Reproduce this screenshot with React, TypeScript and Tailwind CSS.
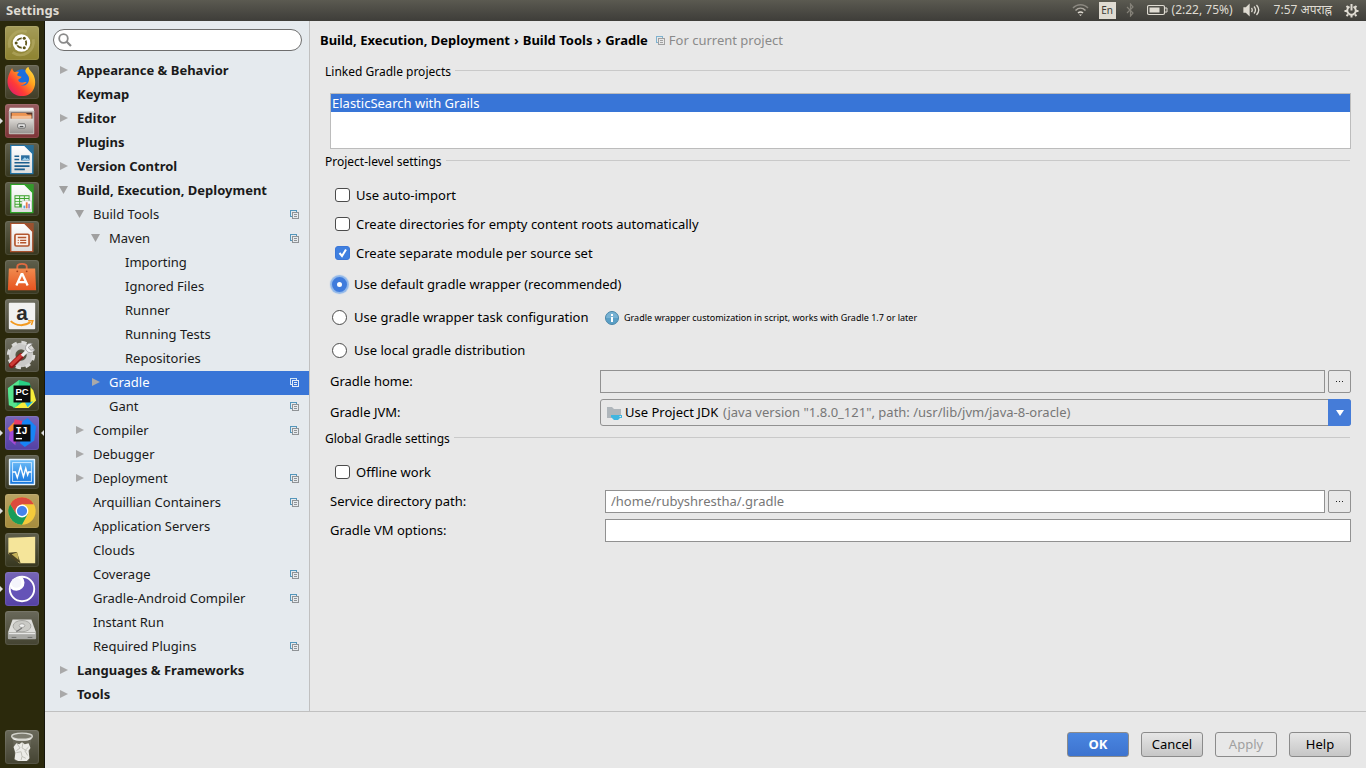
import type { ReactNode } from "react";

type Shape = { tile: string; mark?: "left" | "both"; label: string; art: ReactNode };

function DocArt({ fill, id, children }: { fill: string; id: string; children: ReactNode }) {
  return (
    <>
      <defs>
        <linearGradient id={id} x1="0" y1="0" x2="0" y2="1">
          <stop offset="0" stopColor="#fff" />
          <stop offset="1" stopColor="#dcdcdc" />
        </linearGradient>
      </defs>
      <path d="M5 1.500H20l8.500 8.500v21.500H5z" fill={`url(#${id})`} stroke={fill} strokeWidth="1.500" />
      <path d="M19.500 1h10v10z" fill={fill} opacity="0.85" />
      {children}
    </>
  );
}

const apps: Shape[] = [
  {
    label: "Dash",
    tile: "bg-[#8e8330]",
    art: (
      <>
        <path d="M4 22A14 14 0 0 1 22 5M7 27A14 14 0 0 0 29 13" stroke="#b7ae67" strokeWidth="3" fill="none" opacity=".6" />
        <circle cx="16.500" cy="17" r="9.300" fill="#fff" />
        <circle cx="16.500" cy="17" r="5" fill="none" stroke="#5d5418" strokeWidth="1.900" />
        <circle cx="11.500" cy="17" r="2.600" fill="#fff" />
        <circle cx="19" cy="12.700" r="2.600" fill="#fff" />
        <circle cx="19" cy="21.300" r="2.600" fill="#fff" />
        <circle cx="10.800" cy="17" r="1.600" fill="#5d5418" />
        <circle cx="19.400" cy="12" r="1.600" fill="#5d5418" />
        <circle cx="19.400" cy="22" r="1.600" fill="#5d5418" />
      </>
    ),
  },
  {
    label: "Firefox",
    tile: "bg-[#403d26]",
    art: (
      <>
        <defs>
          <linearGradient id="fx" x1="1" y1="0" x2="0" y2="1">
            <stop offset="0" stopColor="#fff04a" />
            <stop offset=".35" stopColor="#ffa11e" />
            <stop offset=".65" stopColor="#ff3c35" />
            <stop offset="1" stopColor="#d4127e" />
          </linearGradient>
        </defs>
        <circle cx="17" cy="14" r="10.500" fill="#1c6fe0" />
        <path d="M4 7c1-3 2-4 2.500-5 .5 2 1.500 4 3 4.500 1.500-.5 3-.5 4.500 0-1.500 1-2 2-2 3.500 1.500 1 3 .8 4.500 1.500-.5 1.800-2.500 2-3.500 3 .2 1.800 1.500 3 3.500 3 2.200.2 3.500-1 5.500-.5-1.500 2.500-4 3.500-6.500 3.500 5 1.500 9-2 9-7 0-3.500-3-5-4-8 .2-2.500 1.500-4 3.500-4.500 0 3 4 5 5.500 9C34 21 28 32 17 32 6 32 0 22 2 13c.4-2 1-4 2-6z" fill="url(#fx)" />
      </>
    ),
  },
  {
    label: "Files",
    tile: "bg-[#7e3437]",
    mark: "left",
    art: (
      <>
        <defs>
          <linearGradient id="fl" x1="0" y1="0" x2="0" y2="1">
            <stop offset="0" stopColor="#dedbd7" />
            <stop offset="1" stopColor="#979390" />
          </linearGradient>
        </defs>
        <path d="M4 3h25l1 4H3z" fill="#f3f1ee" />
        <rect x="3" y="6" width="27" height="25" rx="1" fill="#c4c0bc" />
        <path d="M5 8h23v7H5z" fill="#57342b" />
        <path d="M6 8.500h15l2 1.500h4v5H6z" fill="#ec9350" />
        <path d="M6 11.500h21v3H6z" fill="#f6bd91" />
        <path d="M4 14.500h25V30H4z" fill="url(#fl)" />
        <rect x="12.500" y="20" width="8" height="4.500" rx="1" fill="#eee" stroke="#666" />
        <path d="M14.500 22.800h4" stroke="#555" strokeWidth="1.300" />
      </>
    ),
  },
  {
    label: "Writer",
    tile: "bg-[#37371f]",
    art: (
      <DocArt fill="#2372a3" id="dw">
        <path d="M9 13h5M9 16.500h5M9 20h16M9 23.500h16M9 27h11" stroke="#1d5f8e" strokeWidth="1.700" />
        <rect x="16" y="12" width="9" height="5.500" fill="#2c6fa0" />
        <path d="m17 17 3-3 2 2 1-1 2 2z" fill="#9bd0ee" />
      </DocArt>
    ),
  },
  {
    label: "Calc",
    tile: "bg-[#37371f]",
    art: (
      <DocArt fill="#2fa328" id="dc">
        <path d="M9 13h16v13H9z" fill="#3da12d" />
        <path d="M10 14h4v2h-4zM15 14h4v2h-4zM20 14h4v2h-4zM10 17h4v2h-4zM15 17h4v2h-4zM20 17h4v2h-4zM10 20h4v2h-4zM15 20h4v2h-4zM10 23h4v2h-4z" fill="#e9f6e6" />
        <path d="M17 19h10v9H17z" fill="#fff" stroke="#bbb" strokeWidth=".6" />
        <path d="M18.500 24h2v3h-2z" fill="#54a4df" />
        <path d="M21 20.500h2V27h-2z" fill="#e87b45" />
        <path d="M23.500 22h2v5h-2z" fill="#a08bd0" />
      </DocArt>
    ),
  },
  {
    label: "Impress",
    tile: "bg-[#37371f]",
    art: (
      <DocArt fill="#a6502c" id="di">
        <rect x="9.500" y="13" width="15" height="12.500" rx="1.500" fill="#fbefe8" stroke="#b3562e" strokeWidth="1.800" />
        <path d="M12.500 16.500h9M15 19.500h6.500M15 22h6.500" stroke="#b3562e" strokeWidth="1.500" />
        <path d="M12.500 19.500h1M12.500 22h1" stroke="#b3562e" strokeWidth="1.500" />
      </DocArt>
    ),
  },
  {
    label: "Software",
    tile: "bg-[#37371f]",
    art: (
      <>
        <defs>
          <linearGradient id="sw" x1="0" y1="0" x2="0" y2="1">
            <stop offset="0" stopColor="#f08a4e" />
            <stop offset="1" stopColor="#e75420" />
          </linearGradient>
        </defs>
        <path d="M12 11V6c0-4 10-4 10 0v5" fill="none" stroke="#df6a41" strokeWidth="2" />
        <path d="M3 8h28l1 23H2z" fill="url(#sw)" />
        <path d="m11 26 5.500-12h1L23 26M12.500 22.500h9" fill="none" stroke="#fff" strokeWidth="2.400" />
        <circle cx="12" cy="11" r="1" fill="#a53c18" />
        <circle cx="22" cy="11" r="1" fill="#a53c18" />
      </>
    ),
  },
  {
    label: "Amazon",
    tile: "bg-[#4a4938]",
    art: (
      <>
        <rect x="3" y="3" width="28" height="28" rx="1" fill="#f1f1f0" />
        <text x="17" y="21" textAnchor="middle" fontFamily="Liberation Sans, sans-serif" fontWeight="700" fontSize="22" fill="#2b2b2b">a</text>
        <path d="M5 22.500c6 5.500 15 5.500 21 1" fill="none" stroke="#f39a1f" strokeWidth="2" />
        <path d="M23.500 22h5l-1.500 4.500" fill="none" stroke="#f39a1f" strokeWidth="1.600" />
      </>
    ),
  },
  {
    label: "System Settings",
    tile: "bg-[#4a4938]",
    art: (
      <>
        <circle cx="16" cy="17" r="9.500" fill="none" stroke="#c9c9c7" strokeWidth="7" />
        <circle cx="16" cy="17" r="13.300" fill="none" stroke="#d9d9d7" strokeWidth="3.500" strokeDasharray="5.500 4.940" />
        <circle cx="16" cy="17" r="5" fill="#55533f" />
        <path d="m6 28 10-10" stroke="#8e1413" strokeWidth="6" strokeLinecap="round" />
        <path d="m6 27 10-9.500" stroke="#cf3b36" strokeWidth="3.500" strokeLinecap="round" />
        <path d="m17 18 7-7" stroke="#ececec" strokeWidth="3.500" />
        <path d="M28 5a5 5 0 1 0 2.500 6l-4 1-3-3z" fill="#f1f1f1" stroke="#8b8b8b" strokeWidth=".7" />
      </>
    ),
  },
  {
    label: "PyCharm",
    tile: "bg-[#37371f]",
    art: (
      <>
        <path d="m2 11 12-9 11 3 3 9-6 15-14 3-5-10z" fill="#27cf85" />
        <path d="m2 11 12-9-3 30-8-3z" fill="#55e58d" />
        <path d="m24 8 5 5 3 11-8 8H9l12-9z" fill="#f6ed3a" />
        <path d="m20 26 9-1-6 6z" fill="#28bce2" />
        <rect x="8" y="8" width="18" height="18" fill="#0b0b0b" />
        <text x="10" y="18" fontFamily="Liberation Sans, sans-serif" fontWeight="700" fontSize="10" fill="#fff">PC</text>
        <path d="M10.500 23h6.500" stroke="#fff" strokeWidth="1.500" />
      </>
    ),
  },
  {
    label: "IntelliJ IDEA",
    tile: "bg-[#5440a5]",
    mark: "both",
    art: (
      <>
        <path d="m2 12 8-8 12 5-8 17-7-5z" fill="#f58a32" />
        <path d="m9 2 11 3-10 23-6-7 4-6z" fill="#e83b69" />
        <path d="m17 5 6-4 9 9-2 15-10 7-5-4z" fill="#1684f5" />
        <path d="m4 16 6-3v17l-7-6z" fill="#a24bd9" />
        <rect x="8" y="8" width="18" height="18" fill="#0b0b0b" />
        <text x="10" y="18" fontFamily="Liberation Mono, monospace" fontWeight="700" fontSize="11" fill="#fff">IJ</text>
        <path d="M10.500 23h6.500" stroke="#fff" strokeWidth="1.500" />
      </>
    ),
  },
  {
    label: "System Monitor",
    tile: "bg-[#3b3b27]",
    art: (
      <>
        <defs>
          <linearGradient id="sm" x1="0" y1="0" x2="0" y2="1">
            <stop offset="0" stopColor="#6dbdf8" />
            <stop offset="1" stopColor="#1474dc" />
          </linearGradient>
        </defs>
        <rect x="3" y="3" width="28" height="28" rx="1" fill="#e4f2ff" />
        <rect x="4.500" y="4.500" width="25" height="25" fill="url(#sm)" />
        <rect x="7" y="7" width="20" height="20" fill="none" stroke="#d3eaff" />
        <path d="M7 17h3l2 6 3.500-12 3 11 2.500-9 2 7 1-3h3" fill="none" stroke="#fff" strokeWidth="1.500" />
      </>
    ),
  },
  {
    label: "Chrome",
    tile: "bg-[#a68c3c]",
    mark: "left",
    art: (
      <>
        <circle cx="17" cy="17" r="14.500" fill="#f4ca3b" />
        <path d="M4.440 9.750A14.500 14.500 0 0 1 29.560 9.750H17l-6 10.750z" fill="#dc4a3d" />
        <path d="M4.440 9.750A14.500 14.500 0 0 0 17 31.500l6-11H11z" fill="#199c5a" />
        <circle cx="17" cy="17" r="6.800" fill="#fff" />
        <circle cx="17" cy="17" r="5.400" fill="#4583ec" />
      </>
    ),
  },
  {
    label: "Sticky Notes",
    tile: "bg-[#37371f]",
    art: (
      <>
        <path d="M2.500 4 31 3v28H14L2.500 21z" fill="#f5e59a" />
        <path d="m2.500 20 9-1 4 12C9 29 5 26 2.500 20z" fill="#4a4222" />
        <path d="m6 21.500 6-2 1.500 8z" fill="#c6b259" />
      </>
    ),
  },
  {
    label: "Eclipse",
    tile: "bg-[#5440a5]",
    mark: "left",
    art: (
      <>
        <circle cx="17" cy="17" r="13" fill="#6553b7" stroke="#fff" strokeWidth="2" />
        <path d="M17 4a6 6 0 0 1-12 12.500C4 10 10 4 17 4z" fill="#fff" />
        <circle cx="11" cy="10.500" r="5.300" fill="#f4f4fb" />
      </>
    ),
  },
  {
    label: "Disk",
    tile: "bg-[#444331]",
    art: (
      <>
        <path d="M7 8h20l5 14H2z" fill="#dededb" />
        <path d="M2 22h30v6q0 1-1 1H3q-1 0-1-1z" fill="#a9a9a5" />
        <path d="M3 23h28" stroke="#f6f6f6" />
        <ellipse cx="17" cy="15" rx="9.500" ry="6" fill="#cacac6" stroke="#9a9a96" strokeWidth=".8" />
        <ellipse cx="17" cy="14.500" rx="3" ry="2" fill="#efefef" stroke="#8c8c88" strokeWidth=".7" />
        <path d="m11 21 6-4" stroke="#777" strokeWidth="1.300" />
        <path d="M6 27h5M23 27h5" stroke="#6c6c68" />
      </>
    ),
  },
];

const trash: Shape = {
  label: "Trash",
  tile: "bg-[#444331]",
  art: (
    <>
      <path d="M7 6h20l-3 26H10z" fill="#6f6e5f" opacity=".7" />
      <path d="m8 17 3-4 3 1 3-2 3 2 4-1 2 5-2 3 1 8-3 3h-9l-4-2 1-7z" fill="#ecece7" />
      <path d="m12 14 3 4-4 3M18 13l-1 5 5 3M24 17l-4 4 3 5M11 23l5-1 1 5M16 31l1-4 4 2" fill="none" stroke="#bdbdb4" />
      <ellipse cx="17" cy="5.500" rx="11" ry="3.200" fill="#7d7c70" stroke="#d3d3cc" strokeWidth="1.500" />
      <path d="M7 8c4 2.500 16 2.500 20 0" fill="none" stroke="#f2f2ee" strokeWidth="1.200" />
    </>
  ),
};

function LauncherItem({ app }: { app: Shape }) {
  return (
    <div className="flex w-full items-center">
      <span className="flex w-[5px] shrink-0">
        {app.mark && (
          <svg width="3" height="6" viewBox="0 0 3 6" aria-hidden="true">
            <path d="M0 0v6l3-3z" fill="#dedede" />
          </svg>
        )}
      </span>
      <button type="button" aria-label={app.label} className={`${app.tile} flex h-[34px] w-[34px] shrink-0 items-center justify-center rounded-[3px] bg-linear-to-b from-white/20 to-transparent shadow-[inset_0_0_1px_1px_rgba(255,255,255,0.1)]`}>
        <svg width="32" height="32" viewBox="0 0 34 34" aria-hidden="true">{app.art}</svg>
      </button>
      <span className="flex flex-1 justify-end">
        {app.mark === "both" && (
          <svg width="3" height="6" viewBox="0 0 3 6" aria-hidden="true">
            <path d="M3 0v6L0 3z" fill="#dedede" />
          </svg>
        )}
      </span>
    </div>
  );
}

function CopyIcon({ front = "#8f9396", back = "#5496bb" }: { front?: string; back?: string }) {
  return (
    <svg width="9" height="9" viewBox="0 0 9 9" shapeRendering="crispEdges" className="shrink-0" aria-hidden="true">
      <path d="M0 0h7v1H1v6H0zM6 1h1v1H6zM1 6h1v1H1z" fill={back} />
      <path d="M2 2h7v7H2zM3 3v5h5V3z" fillRule="evenodd" fill={front} />
      <path d="M4 4h3v1H4zM4 6h3v1H4z" fill={front} />
    </svg>
  );
}

type Row = { t: string; d: number; a?: "open" | "closed"; p?: boolean; sel?: boolean };
const rows: Row[] = [
  { t: "Appearance & Behavior", d: 0, a: "closed" },
  { t: "Keymap", d: 0 },
  { t: "Editor", d: 0, a: "closed" },
  { t: "Plugins", d: 0 },
  { t: "Version Control", d: 0, a: "closed" },
  { t: "Build, Execution, Deployment", d: 0, a: "open" },
  { t: "Build Tools", d: 1, a: "open", p: true },
  { t: "Maven", d: 2, a: "open", p: true },
  { t: "Importing", d: 3 },
  { t: "Ignored Files", d: 3 },
  { t: "Runner", d: 3 },
  { t: "Running Tests", d: 3 },
  { t: "Repositories", d: 3 },
  { t: "Gradle", d: 2, a: "closed", p: true, sel: true },
  { t: "Gant", d: 2, p: true },
  { t: "Compiler", d: 1, a: "closed", p: true },
  { t: "Debugger", d: 1, a: "closed" },
  { t: "Deployment", d: 1, a: "closed", p: true },
  { t: "Arquillian Containers", d: 1, p: true },
  { t: "Application Servers", d: 1 },
  { t: "Clouds", d: 1 },
  { t: "Coverage", d: 1, p: true },
  { t: "Gradle-Android Compiler", d: 1, p: true },
  { t: "Instant Run", d: 1 },
  { t: "Required Plugins", d: 1, p: true },
  { t: "Languages & Frameworks", d: 0, a: "closed" },
  { t: "Tools", d: 0, a: "closed" },
];
const indent = ["pl-3.5", "pl-[30px]", "pl-[46px]", "pl-[62px]"];

function TreeRow({ row }: { row: Row }) {
  return (
    <li
      role="treeitem"
      aria-selected={!!row.sel}
      className={`flex h-6 items-center pr-2.5 pb-0.5 ${indent[row.d]} ${row.sel ? "bg-[#3875d7] text-white" : "text-[#1a1a1a]"} ${row.d === 0 ? "font-bold" : ""}`}
    >
      <span className="flex w-[18px] shrink-0">
        {row.a === "closed" && (
          <svg width="10" height="10" viewBox="0 0 10 10" aria-hidden="true"><path d="M1 1v8l8-4z" fill="#a9a9a9" /></svg>
        )}
        {row.a === "open" && (
          <svg width="10" height="10" viewBox="0 0 10 10" aria-hidden="true"><path d="M0 1h9L4.500 9z" fill="#a0a0a0" /></svg>
        )}
      </span>
      <span className="flex-1 whitespace-nowrap">{row.t}</span>
      {row.p && (row.sel ? <CopyIcon front="#e4ecf8" back="#d0e4f6" /> : <CopyIcon />)}
    </li>
  );
}

function Section({ title }: { title: string }) {
  return (
    <h2 className="flex h-5 items-center gap-1 pr-px text-[12px]">
      <span className="pt-px">{title}</span>
      <span className="mb-px h-px flex-1 bg-[#c9c9c9]" />
    </h2>
  );
}

function Check({ label, checked }: { label: string; checked?: boolean }) {
  return (
    <label className="flex h-[29px] items-center gap-1.5 pb-px pl-[5px]">
      <span className="grid shrink-0">
        <input type="checkbox" defaultChecked={checked} className="peer col-start-1 row-start-1 h-3.5 w-[15px] appearance-none rounded-[3px] border border-[#4b4b4b] bg-white checked:border-[#3a76d8] checked:bg-[#3f7fdf]" />
        <svg width="15" height="14" viewBox="0 0 15 14" className="pointer-events-none invisible col-start-1 row-start-1 peer-checked:visible" aria-hidden="true">
          <path d="m4.500 7 2.500 3 4-6.500" fill="none" stroke="#fff" strokeWidth="2" />
        </svg>
      </span>
      {label}
    </label>
  );
}

function Radio({ label, checked }: { label: string; checked?: boolean }) {
  return (
    <label className="flex h-[33px] items-center gap-[7px] pb-px pl-0.5 whitespace-nowrap">
      <input
        type="radio"
        name="distribution"
        defaultChecked={checked}
        className="h-[15px] w-[15px] shrink-0 appearance-none rounded-full border border-[#4b4b4b] bg-white checked:border-[5px] checked:border-[#3f7bdc] checked:shadow-[0_0_1px_2px_#8fb7ea]"
      />
      {label}
    </label>
  );
}

const field = "h-[23px] min-w-0 flex-1 border border-[#919191] px-[5px] pb-0.5 text-[#777] outline-none";

function Browse({ label }: { label: string }) {
  return (
    <button type="button" aria-label={label} className="flex h-[23px] w-[23px] shrink-0 items-center justify-center rounded-[2px] border border-[#919191]">
      <svg width="7" height="1" viewBox="0 0 7 1" shapeRendering="crispEdges" aria-hidden="true"><path d="M0 0h1v1H0zM3 0h1v1H3zM6 0h1v1H6z" fill="#222" /></svg>
    </button>
  );
}

export default function App() {
  const btn = "h-[25px] w-[62px] rounded-[3px] border border-[#8b8b8b] pb-0.5";
  return (
    <div className="flex h-screen flex-col overflow-hidden bg-[#e8e8e8] font-['Noto_Sans','Open_Sans',sans-serif] text-[13px] leading-5 text-black">
      <header className="flex h-[21px] shrink-0 items-center bg-linear-to-b from-[#5b5a51] to-[#3e3d39] pr-[7px] pb-px pl-1.5 text-[12px] text-[#dfdbd2]">
        <span className="flex-1 text-[13px] font-bold">Settings</span>
        <svg width="17" height="14" viewBox="0 0 17 14" fill="none" strokeWidth="1.500" aria-label="Network">
          <path d="M1 5c4-4.500 11-4.500 15 0" stroke="#8a877f" />
          <path d="M3.500 7.500c3-3 7-3 10 0" stroke="#aaa69e" />
          <path d="M6 10c1.500-1.500 3.500-1.500 5 0" stroke="#dfdbd2" />
          <path d="M7 11.500h3L8.500 13z" fill="#dfdbd2" />
        </svg>
        <span className="ml-2.5 flex h-[17px] w-[17px] items-center justify-center bg-[#dfdbd2] text-[10px] text-[#3c3b37]">En</span>
        <svg width="9" height="14" viewBox="0 0 9 14" fill="none" stroke="#858279" strokeWidth="1.200" className="ml-2.5" aria-label="Bluetooth">
          <path d="m1 4 6 6-2.500 3V1L7 4l-6 6" />
        </svg>
        <svg width="21" height="12" viewBox="0 0 21 12" className="ml-3" aria-label="Battery">
          <rect x=".5" y="1.500" width="17" height="9" rx="1.500" fill="none" stroke="#dfdbd2" strokeWidth="1.200" />
          <path d="M2.500 3.500h10v5h-10z" fill="#dfdbd2" />
          <path d="M18 4h2v4h-2" fill="none" stroke="#dfdbd2" />
        </svg>
        <span className="ml-1">(2:22, 75%)</span>
        <svg width="17" height="14" viewBox="0 0 17 14" fill="none" stroke="#dfdbd2" strokeWidth="1.300" className="ml-2.5" aria-label="Volume">
          <path d="M1 5h2l3-3v10L3 9H1z" fill="#dfdbd2" />
          <path d="M8.500 5q1.500 2 0 4M11 3.500q3 3.500 0 7M13.500 2q4.500 5 0 10" />
        </svg>
        <span className="ml-3.5">7:57 अपराह्न</span>
        <svg width="15" height="15" viewBox="0 0 15 15" fill="none" stroke="#dfdbd2" className="ml-3" aria-label="Session">
          <path d="M5.500 3.700a4.300 4.300 0 1 0 4 0" strokeWidth="2" />
          <path d="M7.500 1v6.500" strokeWidth="2" />
          <path d="m2.500 3 1.500 1.500M12.500 3 11 4.500M.5 8h2.500M14.500 8H12M2.500 13 4 11.500M12.500 13 11 11.500M7.500 12v2.500" strokeWidth="2" />
        </svg>
      </header>

      <div className="flex min-h-0 flex-1">
        <nav aria-label="Launcher" className="flex w-[45px] shrink-0 flex-col gap-[5px] border-r border-[#17160c] bg-[#2b290c] pt-[5px] pb-1">
          {apps.map((app) => <LauncherItem key={app.label} app={app} />)}
          <div className="mt-auto"><LauncherItem app={trash} /></div>
        </nav>

        <div className="flex min-w-0 flex-1 flex-col">
          <div className="flex min-h-0 flex-1">
            <aside className="w-[265px] shrink-0 overflow-hidden border-r border-[#c0c0c0] bg-[#e5eaee]">
              <div className="pt-2 pr-[7px] pb-2 pl-2">
                <label className="flex h-[22px] items-center rounded-full border border-[#6e6e6e] bg-white pl-1">
                  <svg width="14" height="14" viewBox="0 0 14 14" fill="none" stroke="#8a8a8a" aria-hidden="true">
                    <circle cx="5.500" cy="5.500" r="4.300" strokeWidth="1.800" />
                    <path d="m8.500 8.500 4.500 4.500" strokeWidth="2.200" />
                  </svg>
                  <input type="search" aria-label="Search settings" className="min-w-0 flex-1 bg-transparent px-1 outline-none" />
                </label>
              </div>
              <ul role="tree" aria-label="Settings categories">
                {rows.map((r) => <TreeRow key={r.t} row={r} />)}
              </ul>
            </aside>

            <main className="min-w-0 flex-1 pr-[15px] pl-2.5">
              <div className="flex h-10 items-center pb-0.5">
                <h1 className="flex gap-1 font-bold whitespace-nowrap">
                  <span>Build, Execution, Deployment</span><span>›</span><span>Build Tools</span><span>›</span><span>Gradle</span>
                </h1>
                <span className="ml-2 flex items-center gap-1 text-[#8a8a8a]">
                  <CopyIcon front="#a0a0a0" back="#7fb2cf" />For current project
                </span>
              </div>

              <div className="pl-[5px]">
                <Section title="Linked Gradle projects" />
                <ul role="listbox" aria-label="Linked Gradle projects" className="mt-3 ml-[5px] h-14 border border-[#bcbcbc] bg-white">
                  <li role="option" aria-selected="true" className="h-[18px] bg-[#3875d7] px-px leading-[18px] text-white">ElasticSearch with Grails</li>
                </ul>

                <div className="mt-0.5"><Section title="Project-level settings" /></div>
                <div className="pt-2.5 pl-[5px]">
                  <Check label="Use auto-import" />
                  <Check label="Create directories for empty content roots automatically" />
                  <Check label="Create separate module per source set" checked />
                  <div className="grid grid-cols-[275px_1fr] items-center">
                    <Radio label="Use default gradle wrapper (recommended)" checked />
                    <span />
                    <Radio label="Use gradle wrapper task configuration" />
                    <span className="flex items-center gap-[5px] text-[9px]">
                      <svg width="14" height="14" viewBox="0 0 14 14" aria-hidden="true">
                        <circle cx="7" cy="7" r="6.500" fill="#5a9fc6" stroke="#4b86a8" />
                        <path d="M1 7a6 6 0 0 1 12 0z" fill="#8cc0dc" opacity=".6" />
                        <path d="M6 3h2v2H6zM6 6h2v5H6z" fill="#fff" />
                      </svg>
                      Gradle wrapper customization in script, works with Gradle 1.7 or later
                    </span>
                    <Radio label="Use local gradle distribution" />
                  </div>

                  <div className="mt-[3px] flex items-center">
                    <label htmlFor="home" className="w-[270px] shrink-0 pb-0.5">Gradle home:</label>
                    <div className="flex flex-1 gap-[3px]">
                      <input id="home" disabled className={`${field} bg-[#e8e8e8]`} />
                      <Browse label="Choose Gradle home" />
                    </div>
                  </div>
                  <div className="mt-1.5 flex items-center">
                    <label htmlFor="jvm" className="w-[270px] shrink-0 pb-0.5">Gradle JVM:</label>
                    <label htmlFor="jvm" className="flex h-[27px] flex-1 items-center rounded-[3px] border border-[#919191] pl-1.5">
                      <svg width="16" height="14" viewBox="0 0 16 14" aria-hidden="true">
                        <path d="M0 1h5l2 2h7v9H0z" fill="#afb6bb" />
                        <path d="M4 9h11v3h-2l-2 2H7l-3-3z" fill="#40b6e0" />
                        <path d="M12.500 10h1.500v1h-1.500z" fill="#e8e8e8" />
                      </svg>
                      <select id="jvm" className="ml-0.5 appearance-none bg-transparent pb-0.5 outline-none">
                        <option>Use Project JDK</option>
                      </select>
                      <span className="ml-1 flex-1 pb-0.5 text-[#777]">(java version "1.8.0_121", path: /usr/lib/jvm/java-8-oracle)</span>
                      <span className="-my-px -mr-px flex h-[27px] w-[23px] items-center justify-center rounded-r-[3px] bg-[#457cd8]">
                        <svg width="8" height="6" viewBox="0 0 8 6" aria-hidden="true"><path d="M0 0h8L4 6z" fill="#fff" /></svg>
                      </span>
                    </label>
                  </div>
                </div>

                <div className="mt-0.5"><Section title="Global Gradle settings" /></div>
                <div className="pt-2.5 pl-[5px]">
                  <Check label="Offline work" />
                  <div className="mt-[3px] flex items-center">
                    <label htmlFor="dir" className="w-[275px] shrink-0 pb-0.5">Service directory path:</label>
                    <div className="flex flex-1 gap-[3px]">
                      <input id="dir" defaultValue="/home/rubyshrestha/.gradle" className={`${field} bg-white`} />
                      <Browse label="Choose service directory" />
                    </div>
                  </div>
                  <div className="mt-1.5 flex items-center">
                    <label htmlFor="vm" className="w-[275px] shrink-0 pb-0.5">Gradle VM options:</label>
                    <input id="vm" className={`${field} bg-white`} />
                  </div>
                </div>
              </div>
            </main>
          </div>

          <footer className="flex h-[57px] shrink-0 items-start justify-end gap-3 border-t border-[#c0c0c0] pt-5 pr-[15px]">
            <button type="button" className={`${btn} bg-linear-to-b from-[#4a86e0] to-[#3d73cf] font-bold text-white`}>OK</button>
            <button type="button" className={`${btn} bg-linear-to-b from-[#e6e6e6] to-[#c6c6c6]`}>Cancel</button>
            <button type="button" disabled className={`${btn} text-[#a0a0a0]`}>Apply</button>
            <button type="button" className={`${btn} bg-linear-to-b from-[#e6e6e6] to-[#c6c6c6]`}>Help</button>
          </footer>
        </div>
      </div>
    </div>
  );
}
